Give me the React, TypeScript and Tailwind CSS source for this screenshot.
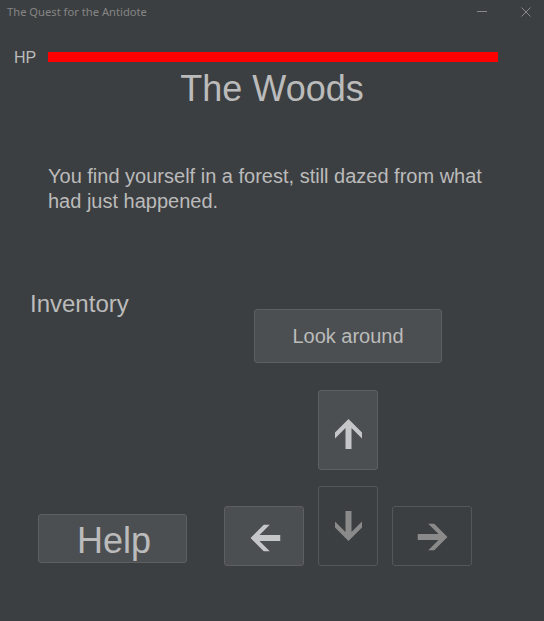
import type { ReactNode } from "react";

const ARROW = "M13.5 0 L27 13.5 L27 19.5 L16.5 9 L16.5 30 L10.5 30 L10.5 9 L0 19.5 L0 13.5 Z";

function Arrow({ rotate, color }: { rotate: string; color: string }) {
  return (
    <svg width="27" height="30" viewBox="0 0 27 30" className={rotate} aria-hidden>
      <path d={ARROW} fill={color} />
    </svg>
  );
}

function Btn({ className, children }: { className: string; children?: ReactNode }) {
  return (
    <div className={`flex items-center justify-center rounded-[3px] border ${className}`}>
      {children}
    </div>
  );
}

export default function App() {
  return (
    <div
      className="h-[621px] w-full overflow-hidden bg-[#3c3f41] text-[#bbbbbb]"
      style={{ fontFamily: '"Liberation Sans", Arial, sans-serif' }}
    >
      {/* window title bar */}
      <div className="flex h-[28px] items-start pl-[7px] pr-[13px]">
        <span className="text-[11.2px] leading-[24px] text-[#858585] [font-family:'Noto_Sans',sans-serif]">
          The Quest for the Antidote
        </span>
        <div className="flex-1" />
        <svg width="10" height="1" className="mt-[11px]" aria-hidden>
          <rect width="10" height="1" fill="#8a8a8a" />
        </svg>
        <svg width="10" height="10" viewBox="0 0 10 10" className="ml-[34px] mt-[7px]" aria-hidden>
          <path d="M0.5 0.5 L9.5 9.5 M9.5 0.5 L0.5 9.5" stroke="#8a8a8a" strokeWidth="1" />
        </svg>
      </div>

      {/* hp */}
      <div className="mt-[22px] flex items-start">
        <span className="ml-[14px] w-[34px] text-[16px] leading-[16px]">HP</span>
        <div className="mt-[2px] h-[10px] w-[450px] bg-[#ff0000]" />
      </div>

      <h1 className="mt-[3px] text-center text-[36px] leading-[40px]">The Woods</h1>

      <p className="mt-[55px] w-[498px] pl-[48px] text-[20px] leading-[25px]">
        You find yourself in a forest, still dazed from what had just happened.
      </p>

      {/* lower area */}
      <div className="mt-[76px] flex">
        <div className="flex w-[224px] flex-col">
          <div className="pl-[30px] text-[24px] leading-[28px]">Inventory</div>
          <Btn className="ml-[38px] mt-[196px] h-[49px] w-[149px] border-[#5e6060] bg-[#4c4f51] pl-[3px] pt-[4px] text-[36px] leading-[40px]">
            Help
          </Btn>
        </div>

        <div className="flex flex-col">
          <Btn className="ml-[30px] mt-[19px] h-[54px] w-[188px] border-[#5e6060] bg-[#4c4f51] text-[20px] leading-[25px]">
            Look around
          </Btn>
          <Btn className="ml-[94px] mt-[27px] h-[80px] w-[60px] border-[#5e6060] bg-[#4c4f51] pt-[7px]">
            <Arrow rotate="" color="#c4c6c8" />
          </Btn>
          <div className="mt-[16px] flex items-end gap-[14px]">
            <Btn className="h-[60px] w-[80px] border-[#5e6060] bg-[#4c4f51] pl-[2px] pt-[3px]">
              <Arrow rotate="-rotate-90" color="#c4c6c8" />
            </Btn>
            <Btn className="h-[80px] w-[60px] border-[#55585a]">
              <Arrow rotate="rotate-180" color="#8a8a8a" />
            </Btn>
            <Btn className="h-[60px] w-[80px] border-[#55585a] pl-[1px] pt-[2px]">
              <Arrow rotate="rotate-90" color="#8a8a8a" />
            </Btn>
          </div>
        </div>
      </div>
    </div>
  );
}
